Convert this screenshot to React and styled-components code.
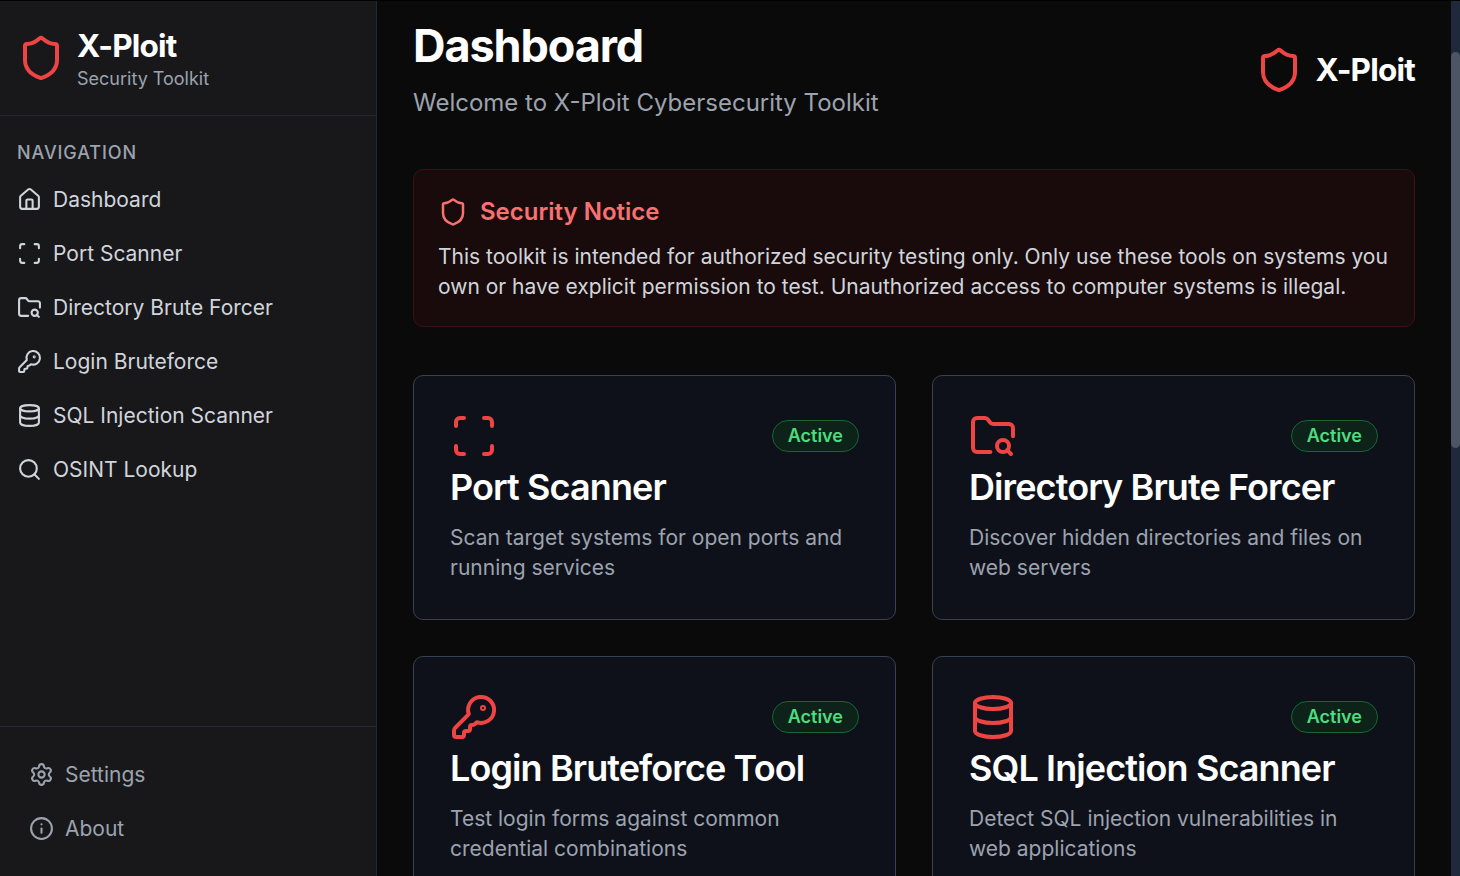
import React from "react";
import styled, { createGlobalStyle } from "styled-components";
import { Shield, House, Scan, FolderSearch, KeyRound, Database, Search, Settings, Info } from "lucide-react";

const Global = createGlobalStyle`
  html, body { margin: 0; padding: 0; height: 100%; background: #000; overflow: hidden; }
  * { box-sizing: border-box; }
  body { font-family: Inter, "Liberation Sans", sans-serif; }
`;
const Shell = styled.div`
  display: flex;
  height: 875px;
  margin-top: 1px;
  background: #0a0a0a;
`;
const Sidebar = styled.aside`
  width: 377px;
  flex: none;
  display: flex;
  flex-direction: column;
  background: #18181b;
  border-right: 1px solid #1f2937;
`;
const Brand = styled.div`
  height: 115px;
  flex: none;
  display: flex;
  align-items: center;
  gap: 12px;
  padding: 0 17px;
  border-bottom: 1px solid #1f2937;
`;
const BrandText = styled.div`
  display: flex;
  flex-direction: column;
  gap: 2px;
  margin-top: 3px;
`;
const Logo = styled.div`
  font-size: 31.5px;
  line-height: 36px;
  font-weight: 700;
  color: #fff;
  letter-spacing: -0.79px;
`;
const Tagline = styled.div`
  font-size: 18px;
  line-height: 25px;
  color: #9ca3af;
`;
const Nav = styled.nav`
  flex: 1;
  padding: 26px 17px 0;
`;
const NavLabel = styled.div`
  font-size: 18px;
  line-height: 22px;
  font-weight: 500;
  letter-spacing: 0.9px;
  color: #9ca3af;
  margin-bottom: 8.5px;
`;
const NavItem = styled.div`
  display: flex;
  align-items: center;
  gap: 11px;
  height: 54px;
  font-size: 21px;
  color: ${(p) => (p.$muted ? "#9ca3af" : "#d1d5db")};
  svg { flex: none; }
`;
const Footer = styled.div`
  flex: none;
  height: 150px;
  padding: 20.5px 29px 0;
  border-top: 1px solid #1f2937;
`;
const Main = styled.main`
  flex: 1;
  min-width: 0;
  overflow: hidden;
  padding: 20px 36px 0;
`;
const ScrollTrack = styled.div`
  width: 9px;
  flex: none;
  padding-top: 51px;
  background: #1e293b;
`;
const ScrollThumb = styled.div`
  height: 396px;
  background: #4b5563;
  border-radius: 5px;
`;
const Header = styled.header`
  display: flex;
  justify-content: space-between;
  align-items: center;
  margin-bottom: 51px;
`;
const Title = styled.h1`
  margin: 0 0 17px;
  font-size: 45px;
  line-height: 50px;
  font-weight: 700;
  letter-spacing: -1.1px;
  color: #fff;
`;
const Subtitle = styled.p`
  margin: 0;
  font-size: 24px;
  line-height: 30px;
  color: #9ca3af;
`;
const HeaderBrand = styled.div`
  display: flex;
  align-items: center;
  gap: 12px;
`;
const Notice = styled.section`
  padding: 24px;
  margin-bottom: 48px;
  background: #190b0c;
  border: 1px solid #3d1215;
  border-radius: 10px;
`;
const NoticeHead = styled.div`
  display: flex;
  align-items: center;
  gap: 12px;
  margin-bottom: 13px;
`;
const NoticeTitle = styled.h2`
  margin: 0;
  font-size: 24px;
  line-height: 35px;
  font-weight: 600;
  color: #f87171;
`;
const NoticeBody = styled.p`
  margin: 0;
  font-size: 21px;
  line-height: 30px;
  color: #d1d5db;
`;
const Grid = styled.div`
  display: grid;
  grid-template-columns: 1fr 1fr;
  gap: 36px;
`;
const Card = styled.article`
  height: 245px;
  padding: 36px;
  background: #0f111a;
  border: 1px solid #374151;
  border-radius: 10px;
`;
const CardTop = styled.div`
  display: flex;
  align-items: center;
  justify-content: space-between;
  margin-bottom: 5px;
  svg { display: block; }
`;
const Badge = styled.span`
  display: inline-flex;
  align-items: center;
  height: 32px;
  padding: 0 15px 2px;
  font-size: 18px;
  font-weight: 600;
  color: #4ade80;
  background: #0d2319;
  border: 1px solid #166534;
  border-radius: 999px;
`;
const CardTitle = styled.h3`
  margin: 0 0 13px;
  font-size: 36px;
  line-height: 45px;
  font-weight: 600;
  letter-spacing: -0.9px;
  color: #fff;
`;
const CardText = styled.p`
  margin: 0;
  font-size: 21px;
  line-height: 30px;
  color: #9ca3af;
`;

const red = "#ef4444";
const navItems = [
  [House, "Dashboard"],
  [Scan, "Port Scanner"],
  [FolderSearch, "Directory Brute Forcer"],
  [KeyRound, "Login Bruteforce"],
  [Database, "SQL Injection Scanner"],
  [Search, "OSINT Lookup"],
];
const cards = [
  [Scan, "Port Scanner", "Scan target systems for open ports and running services"],
  [FolderSearch, "Directory Brute Forcer", "Discover hidden directories and files on web servers"],
  [KeyRound, "Login Bruteforce Tool", "Test login forms against common credential combinations"],
  [Database, "SQL Injection Scanner", "Detect SQL injection vulnerabilities in web applications"],
];

export default function App() {
  return (
    <>
      <Global />
      <Shell>
        <Sidebar>
          <Brand>
            <Shield size={48} color={red} strokeWidth={2} />
            <BrandText>
              <Logo>X-Ploit</Logo>
              <Tagline>Security Toolkit</Tagline>
            </BrandText>
          </Brand>
          <Nav>
            <NavLabel>NAVIGATION</NavLabel>
            {navItems.map(([Icon, label]) => (
              <NavItem key={label}>
                <Icon size={25} strokeWidth={2} />
                {label}
              </NavItem>
            ))}
          </Nav>
          <Footer>
            <NavItem $muted>
              <Settings size={25} />
              Settings
            </NavItem>
            <NavItem $muted>
              <Info size={25} />
              About
            </NavItem>
          </Footer>
        </Sidebar>
        <Main>
          <Header>
            <div>
              <Title>Dashboard</Title>
              <Subtitle>Welcome to X-Ploit Cybersecurity Toolkit</Subtitle>
            </div>
            <HeaderBrand>
              <Shield size={48} color={red} />
              <Logo>X-Ploit</Logo>
            </HeaderBrand>
          </Header>
          <Notice>
            <NoticeHead>
              <Shield size={30} color="#f87171" />
              <NoticeTitle>Security Notice</NoticeTitle>
            </NoticeHead>
            <NoticeBody>
              This toolkit is intended for authorized security testing only. Only use these tools on systems you own or have explicit permission to test. Unauthorized access to computer systems is illegal.
            </NoticeBody>
          </Notice>
          <Grid>
            {cards.map(([Icon, title, text]) => (
              <Card key={title}>
                <CardTop>
                  <Icon size={48} color={red} />
                  <Badge>Active</Badge>
                </CardTop>
                <CardTitle>{title}</CardTitle>
                <CardText>{text}</CardText>
              </Card>
            ))}
          </Grid>
        </Main>
        <ScrollTrack aria-hidden="true">
          <ScrollThumb />
        </ScrollTrack>
      </Shell>
    </>
  );
}
